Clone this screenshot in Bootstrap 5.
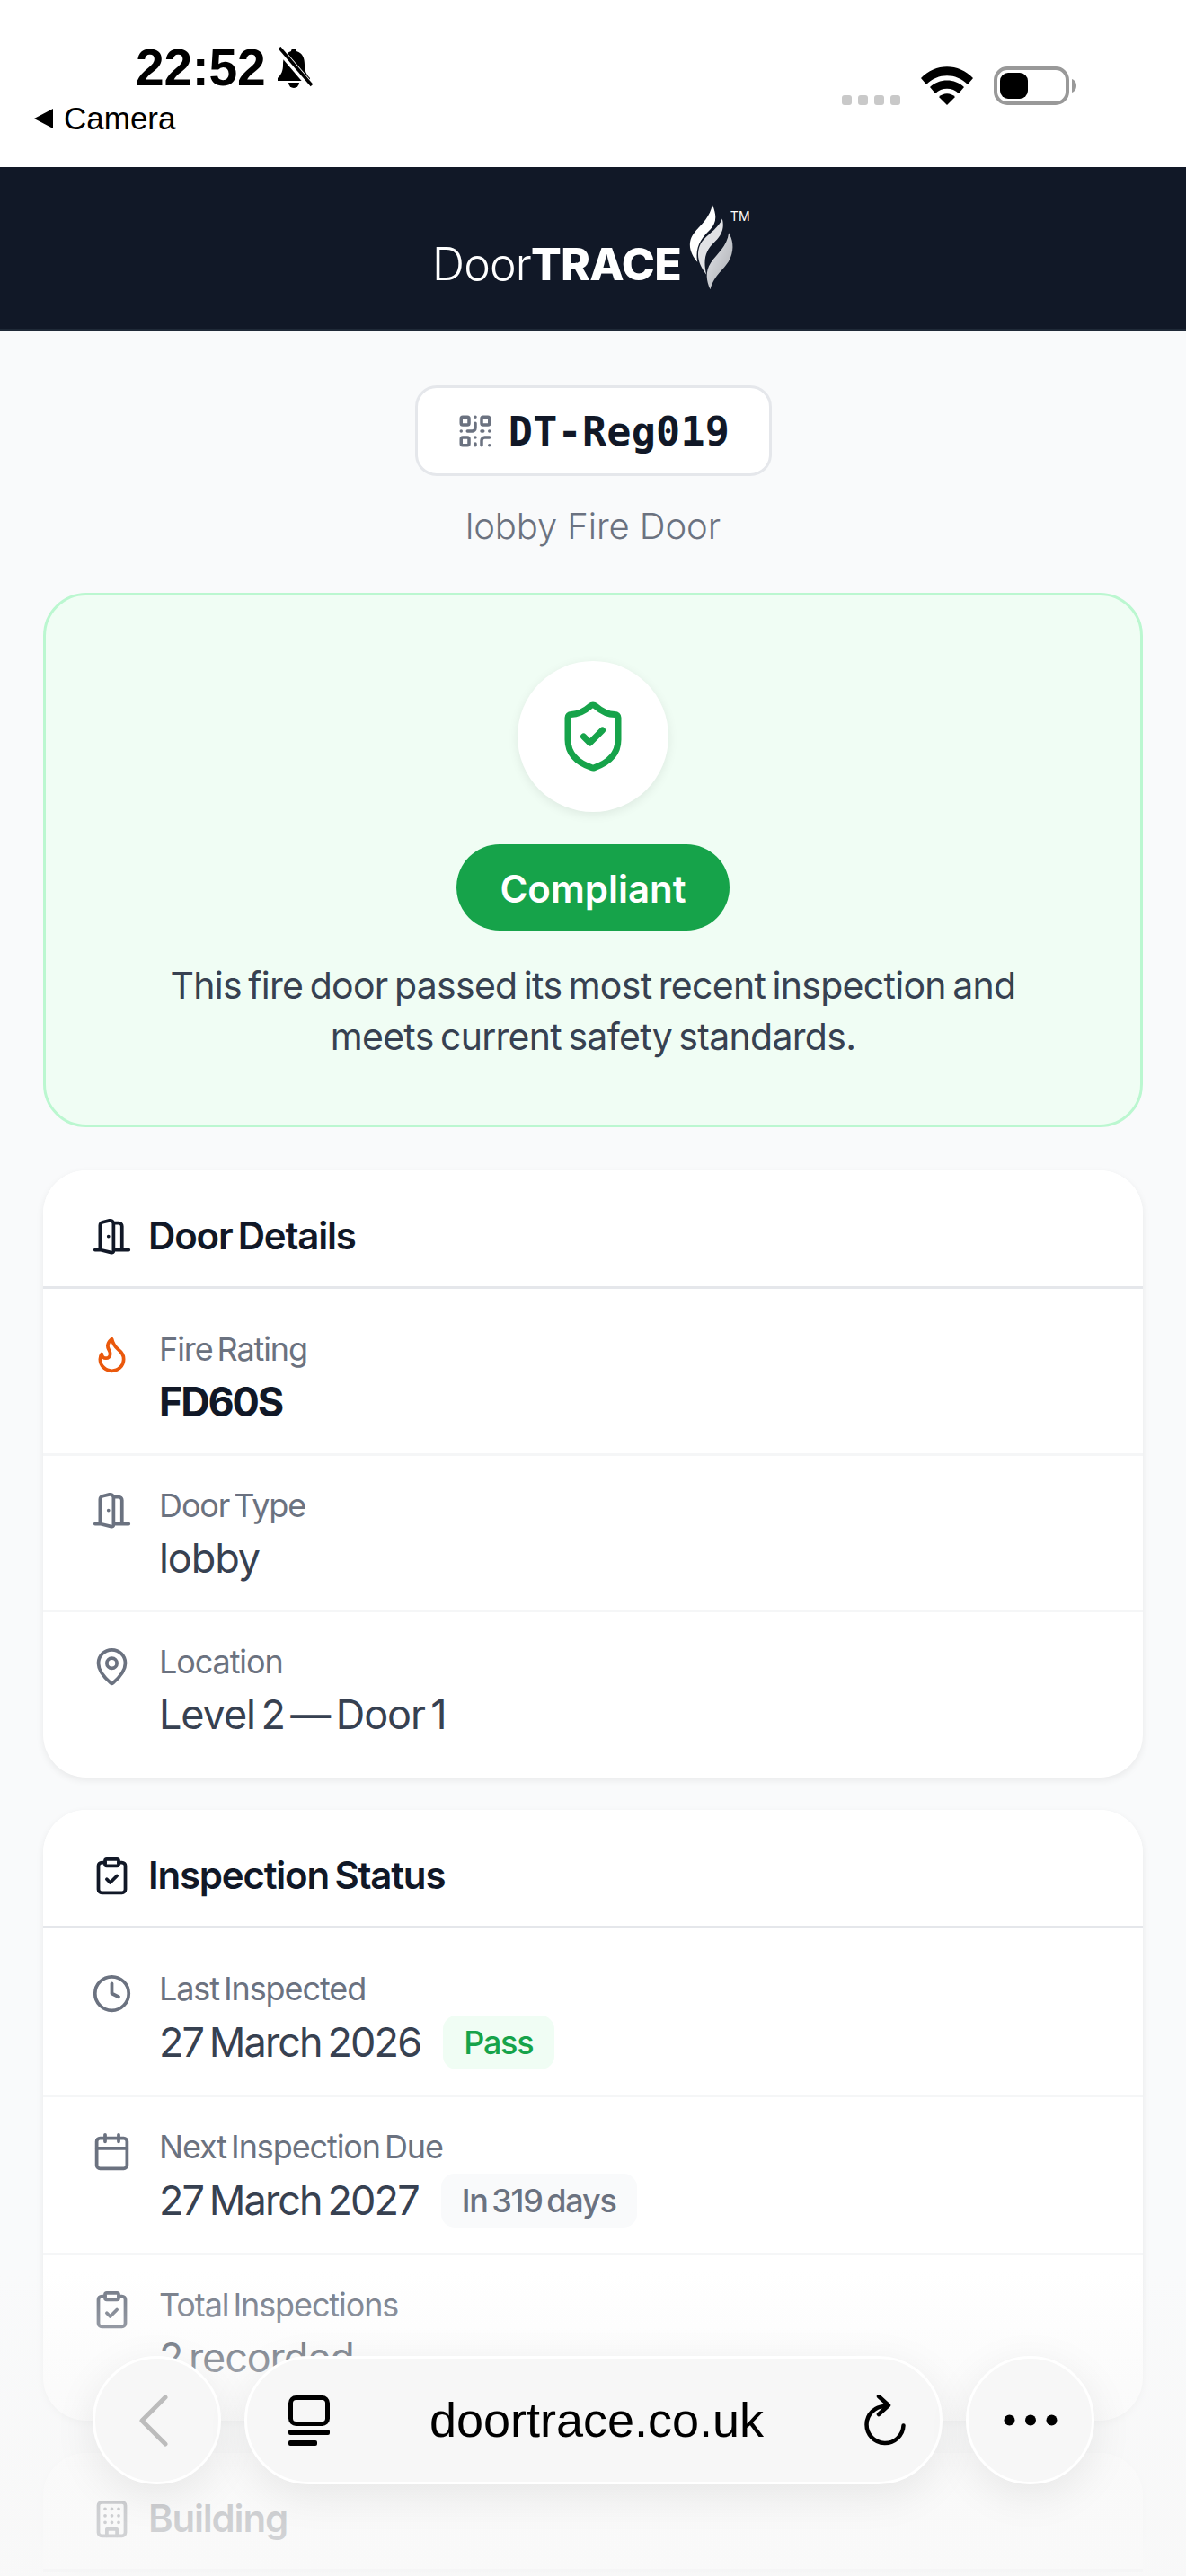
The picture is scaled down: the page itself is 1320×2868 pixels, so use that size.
<!DOCTYPE html>
<html lang="en">
<head>
    <meta charset="UTF-8">
    <meta name="viewport" content="width=device-width, initial-scale=1.0">
    <title>DoorTRACE</title>
    <link href="https://cdn.jsdelivr.net/npm/bootstrap@5.3.0/dist/css/bootstrap.min.css" rel="stylesheet">
    <style>
        html, body { height: 2868px; overflow: hidden; }
        body { background: #f9fafb; font-family: Inter, "Noto Sans", sans-serif; color: #374151; }
        .page-wrap { position: relative; height: 2868px; overflow: hidden; }
        svg { display: block; flex-shrink: 0; }
        .ico { fill: none; stroke: currentColor; stroke-width: 2; stroke-linecap: round; stroke-linejoin: round; }

        .status-bar { height: 186px; background: #fff; padding: 47px 122px 0 38px; font-family: "Liberation Sans", sans-serif; color: #000; }
        .clock-row { padding-left: 113px; height: 56px; gap: 10px; }
        .clock-text { font-size: 57px; line-height: 56px; font-weight: 700; letter-spacing: -.3px; }
        .back-app { margin-top: 11px; font-size: 35px; line-height: 36px; gap: 12px; }
        .back-tri { width: 0; height: 0; border-top: 11px solid transparent; border-bottom: 11px solid transparent; border-right: 21px solid #000; }
        .status-right { margin-top: 28px; height: 42px; }
        .sig-dots { gap: 7px; margin-right: 23px; }
        .sig-dot { width: 11px; height: 11px; background: #c9c9c9; border-radius: 3px; }
        .wifi-ico { margin-right: 23px; }

        .top-head { height: 183px; background: #111827; border-bottom: 3px solid #1f2937; padding-left: 481px; padding-top: 40px; color: #fff; }
        .logo-word { font-size: 50px; line-height: 50px; margin-top: 43px; letter-spacing: -.8px; }
        .logo-word span { font-weight: 300; }
        .logo-word b { font-weight: 800; }
        .logo-flame { margin-left: 8px; }
        .logo-tm { font-size: 14px; line-height: 14px; margin-top: 8px; margin-left: -5px; }

        .main-col { padding: 60px 48px 0; }
        .reg-chip { width: 397px; height: 101px; background: #fff; border: 3px solid #e5e7eb; border-radius: 24px; color: #6b7280; }
        .reg-num { font-family: "DejaVu Sans Mono", monospace; font-weight: 700; font-size: 45px; color: #111827; letter-spacing: .3px; padding-top: 2px; }
        .door-sub { font-size: 40px; line-height: 56px; margin-top: 28px; color: #6b7280; font-weight: 300; letter-spacing: -.1px; }

        .ok-panel { margin-top: 46px; height: 595px; background: #f0fdf4; border: 3px solid #bbf7d0; border-radius: 48px; padding-top: 73px; }
        .ok-circle { width: 168px; height: 168px; border-radius: 50%; background: #fff; box-shadow: 0 3px 12px rgba(0,0,0,.08); color: #16a34a; }
        .ok-pill { margin-top: 36px; width: 304px; height: 96px; border-radius: 48px; background: #16a34a; color: #fff; font-size: 42px; font-weight: 600; padding-top: 3px; }
        .ok-text { margin-top: 33px; font-size: 41px; line-height: 57px; letter-spacing: -.7px; word-spacing: -3.5px; }

        .info-card { margin-top: 48px; border: 0; border-radius: 48px; background: #fff; box-shadow: 0 3px 9px rgba(0,0,0,.07); }
        .info-card + .info-card { margin-top: 36px; }
        .info-head { background: #fff; border-bottom: 3px solid #e5e7eb; padding: 48px 54px 31px; height: 132px; border-radius: 48px 48px 0 0 !important; font-size: 42px; line-height: 50px; font-weight: 600; color: #111827; letter-spacing: -1.2px; word-spacing: -3px; gap: 18px; }
        .info-list { padding: 12px 0 13px; }
        .info-list .info-row { display: flex; gap: 30px; padding: 27px 54px 26px; border-width: 0 0 3px; border-style: solid; border-color: #f5f6f7; background: transparent; color: #374151; }
        .info-list .info-row:last-child { border-bottom-width: 0; }
        .row-ico { color: #6b7280; margin-top: 11px; }
        .row-ico.is-fire { color: #ea580c; }
        .row-label { font-size: 36px; line-height: 56px; color: #6b7280; letter-spacing: -1.1px; word-spacing: -4px; }
        .row-value { font-size: 45px; line-height: 62px; letter-spacing: -1.1px; word-spacing: -5px; }
        .row-value.is-strong { font-weight: 700; color: #111827; letter-spacing: -2.2px; }
        .row-value.has-tag { height: 64px; }
        .row-date { letter-spacing: -1.9px; word-spacing: -4px; }
        .tag-soft { font-size: 36px; line-height: 60px; height: 60px; padding: 0 23px; border-radius: 15px; margin-left: 25px; letter-spacing: -1.2px; word-spacing: -4px; font-weight: 500; }
        .tag-pass { background: #f0fdf4; color: #16a34a; }
        .tag-muted { background: #f9fafb; color: #6b7280; }

        .bottom-fade { position: absolute; left: 0; right: 0; bottom: 0; height: 340px; pointer-events: none; background: linear-gradient(to bottom, rgba(248,248,248,0), rgba(248,248,248,.55) 35%, rgba(248,248,248,.8) 70%, rgba(248,248,248,.85)); }
        .safari-bar { position: absolute; left: 103px; right: 102px; bottom: 102px; height: 143px; gap: 26px; }
        .safari-btn { background: #f7f7f7; border: 3px solid #fff; box-shadow: 0 12px 48px rgba(0,0,0,.08); }
        .safari-round { width: 143px; border-radius: 50%; }
        .chev-back { margin-right: 8px; }
        .safari-url { flex: 1; border-radius: 72px; padding: 0 37px 0 46px; font-family: "Liberation Sans", sans-serif; font-size: 54px; color: #000; }
    </style>
</head>

<body>
    <div class="page-wrap">
        <div class="status-bar d-flex justify-content-between">
            <div>
                <div class="clock-row d-flex align-items-center">
                    <span class="clock-text">22:52</span>
                    <svg width="44" height="46" viewBox="0 0 44 46">
                        <path d="M22 2c-2 0-3 1.500-3 3C12 7 10 13 10 20c0 7-2 11-6 15v3h36v-3c-4-4-6-8-6-15 0-7-2-13-9-15 0-1.500-1-3-3-3z"/>
                        <path d="M16 40a6 6 0 0 0 12 0z"/>
                        <path d="M5 2 41 44" stroke="#fff" stroke-width="8"/>
                        <path d="M6 1 42 43" stroke="#000" stroke-width="3.500"/>
                    </svg>
                </div>
                <div class="back-app d-flex align-items-center">
                    <span class="back-tri"></span>
                    <span>Camera</span>
                </div>
            </div>
            <div class="status-right d-flex align-items-end">
                <div class="sig-dots d-flex">
                    <span class="sig-dot"></span><span class="sig-dot"></span><span class="sig-dot"></span><span class="sig-dot"></span>
                </div>
                <svg class="wifi-ico" width="58" height="43" viewBox="0 0 58 43">
                    <path d="M0 13C16-4 42-4 58 13l-6 7C39 7 19 7 6 20z"/>
                    <path d="M10 23c10-10 28-10 38 0l-6 7c-7-7-19-7-26 0z"/>
                    <path d="M20 34c5-5 13-5 18 0L29 43z"/>
                </svg>
                <svg width="92" height="43" viewBox="0 0 92 43">
                    <rect x="2" y="2" width="80" height="39" rx="13" fill="none" stroke="#999" stroke-width="4"/>
                    <rect x="7" y="7" width="31" height="29" rx="9"/>
                    <path d="M87 14c3 1 5 4 5 7.500s-2 6.500-5 7.500z" fill="#999"/>
                </svg>
            </div>
        </div>

        <div class="top-head d-flex align-items-start">
            <div class="logo-word"><span>Door</span><b>TRACE</b></div>
            <svg class="logo-flame" width="52" height="98" viewBox="975 80 155 295">
                <defs>
                    <linearGradient id="flameGrad" x1="0" y1="0" x2="1" y2="1">
                        <stop offset="0" stop-color="#e5e7eb"/>
                        <stop offset="1" stop-color="#a9abb0"/>
                    </linearGradient>
                </defs>
                <path d="M1055 85C1072 125 1068 150 1045 172C1022 195 995 225 1005 278C985 255 972 225 985 195C998 165 1045 140 1055 85Z" fill="#fff"/>
                <path d="M1088 133C1097 165 1085 190 1060 213C1035 237 1022 265 1035 320C1012 290 1000 260 1012 225C1025 190 1075 170 1088 133Z" fill="#e1e2e5"/>
                <path d="M1110 180C1122 200 1130 230 1115 265C1100 300 1060 320 1048 370C1035 340 1030 310 1050 280C1070 250 1105 225 1110 180Z" fill="url(#flameGrad)"/>
            </svg>
            <span class="logo-tm">TM</span>
        </div>

        <div class="main-col">
            <div class="d-flex flex-column align-items-center">
                <div class="reg-chip d-flex align-items-center justify-content-center gap-3">
                    <svg class="ico" width="42" height="42" viewBox="0 0 24 24">
                        <rect width="5" height="5" x="3" y="3" rx="1"/><rect width="5" height="5" x="16" y="3" rx="1"/><rect width="5" height="5" x="3" y="16" rx="1"/>
                        <path d="M21 16h-3a2 2 0 0 0-2 2v3M21 21v.01M12 7v3a2 2 0 0 1-2 2H7M3 12h.01M12 3h.01M12 16v.01M16 12h1M21 12v.01M12 21v-1"/>
                    </svg>
                    <span class="reg-num">DT-Reg019</span>
                </div>
                <div class="door-sub">lobby Fire Door</div>
            </div>

            <div class="ok-panel d-flex flex-column align-items-center text-center">
                <div class="ok-circle d-flex align-items-center justify-content-center">
                    <svg class="ico" width="84" height="84" viewBox="0 0 24 24">
                        <path d="M20 13c0 5-3.500 7.500-7.660 8.950a1 1 0 0 1-.67-.01C7.500 20.500 4 18 4 13V6a1 1 0 0 1 1-1c2 0 4.500-1.200 6.240-2.720a1.170 1.170 0 0 1 1.520 0C14.510 3.810 17 5 19 5a1 1 0 0 1 1 1z"/>
                        <path d="m9 12 2 2 4-4"/>
                    </svg>
                </div>
                <div class="ok-pill d-flex align-items-center justify-content-center">Compliant</div>
                <div class="ok-text">This fire door passed its most recent inspection and<br>meets current safety standards.</div>
            </div>

            <div class="card info-card">
                <div class="card-header info-head d-flex align-items-center">
                    <svg class="ico" width="45" height="45" viewBox="0 0 24 24"><g transform="matrix(-1 0 0 1 24 0)"><path d="M11 20H2M11 4.562v16.157a1 1 0 0 0 1.242.97L19 20V5.562a2 2 0 0 0-1.515-1.940l-4-1A2 2 0 0 0 11 4.561zM11 4H8a2 2 0 0 0-2 2v14M14 12h.01M22 20h-3"/></g></svg>
                    <span>Door Details</span>
                </div>
                <div class="list-group list-group-flush info-list">
                    <div class="list-group-item info-row">
                        <svg class="ico row-ico is-fire" width="45" height="45" viewBox="0 0 24 24"><path d="M8.500 14.500A2.500 2.500 0 0 0 11 12c0-1.380-.5-2-1-3-1.072-2.143-.224-4.054 2-6 .5 2.500 2 4.900 4 6.500 2 1.600 3 3.500 3 5.500a7 7 0 1 1-14 0c0-1.153.433-2.294 1-3a2.500 2.500 0 0 0 2.500 2.500z"/></svg>
                        <div>
                            <div class="row-label">Fire Rating</div>
                            <div class="row-value is-strong">FD60S</div>
                        </div>
                    </div>
                    <div class="list-group-item info-row">
                        <svg class="ico row-ico" width="45" height="45" viewBox="0 0 24 24"><g transform="matrix(-1 0 0 1 24 0)"><path d="M11 20H2M11 4.562v16.157a1 1 0 0 0 1.242.97L19 20V5.562a2 2 0 0 0-1.515-1.940l-4-1A2 2 0 0 0 11 4.561zM11 4H8a2 2 0 0 0-2 2v14M14 12h.01M22 20h-3"/></g></svg>
                        <div>
                            <div class="row-label">Door Type</div>
                            <div class="row-value">lobby</div>
                        </div>
                    </div>
                    <div class="list-group-item info-row">
                        <svg class="ico row-ico" width="45" height="45" viewBox="0 0 24 24"><path d="M20 10c0 4.993-5.539 10.193-7.399 11.799a1 1 0 0 1-1.202 0C9.539 20.193 4 14.993 4 10a8 8 0 0 1 16 0"/><circle cx="12" cy="10" r="3"/></svg>
                        <div>
                            <div class="row-label">Location</div>
                            <div class="row-value">Level 2 — Door 1</div>
                        </div>
                    </div>
                </div>
            </div>

            <div class="card info-card">
                <div class="card-header info-head d-flex align-items-center">
                    <svg class="ico" width="45" height="45" viewBox="0 0 24 24"><rect width="8" height="4" x="8" y="2" rx="1"/><path d="M16 4h2a2 2 0 0 1 2 2v14a2 2 0 0 1-2 2H6a2 2 0 0 1-2-2V6a2 2 0 0 1 2-2h2"/><path d="m9 14 2 2 4-4"/></svg>
                    <span>Inspection Status</span>
                </div>
                <div class="list-group list-group-flush info-list">
                    <div class="list-group-item info-row">
                        <svg class="ico row-ico" width="45" height="45" viewBox="0 0 24 24"><circle cx="12" cy="12" r="10"/><path d="M12 6v6l4 2"/></svg>
                        <div>
                            <div class="row-label">Last Inspected</div>
                            <div class="row-value has-tag d-flex align-items-center"><span class="row-date">27 March 2026</span><span class="tag-soft tag-pass">Pass</span></div>
                        </div>
                    </div>
                    <div class="list-group-item info-row">
                        <svg class="ico row-ico" width="45" height="45" viewBox="0 0 24 24"><path d="M8 2v4M16 2v4M3 10h18"/><rect width="18" height="18" x="3" y="4" rx="2"/></svg>
                        <div>
                            <div class="row-label">Next Inspection Due</div>
                            <div class="row-value has-tag d-flex align-items-center"><span class="row-date">27 March 2027</span><span class="tag-soft tag-muted">In 319 days</span></div>
                        </div>
                    </div>
                    <div class="list-group-item info-row">
                        <svg class="ico row-ico" width="45" height="45" viewBox="0 0 24 24"><rect width="8" height="4" x="8" y="2" rx="1"/><path d="M16 4h2a2 2 0 0 1 2 2v14a2 2 0 0 1-2 2H6a2 2 0 0 1-2-2V6a2 2 0 0 1 2-2h2"/><path d="m9 14 2 2 4-4"/></svg>
                        <div>
                            <div class="row-label">Total Inspections</div>
                            <div class="row-value">2 recorded</div>
                        </div>
                    </div>
                </div>
            </div>

            <div class="card info-card">
                <div class="card-header info-head d-flex align-items-center">
                    <svg class="ico" width="45" height="45" viewBox="0 0 24 24"><rect width="16" height="20" x="4" y="2" rx="2"/><path d="M9 22v-4h6v4M8 6h.01M16 6h.01M12 6h.01M12 10h.01M12 14h.01M16 10h.01M16 14h.01M8 10h.01M8 14h.01"/></svg>
                    <span>Building</span>
                </div>
            </div>
        </div>

        <div class="bottom-fade"></div>

        <div class="safari-bar d-flex">
            <div class="safari-btn safari-round d-flex align-items-center justify-content-center">
                <svg class="chev-back" width="34" height="58" viewBox="0 0 34 58"><path d="M30 3 4 29l26 26" fill="none" stroke="#bcbcbc" stroke-width="5" stroke-linecap="round" stroke-linejoin="round"/></svg>
            </div>
            <div class="safari-btn safari-url d-flex align-items-center justify-content-between">
                <svg width="46" height="56" viewBox="0 0 46 56">
                    <rect x="2.500" y="2.500" width="41" height="29" rx="6" fill="none" stroke="#000" stroke-width="5"/>
                    <rect y="38" width="46" height="6" rx="2"/>
                    <rect y="50" width="32" height="6" rx="2"/>
                </svg>
                <span>doortrace.co.uk</span>
                <svg width="48" height="58" viewBox="0 0 48 58">
                    <path d="M24 13a20.500 20.500 0 1 0 20.500 21.500M17 2l11 10-11 10" fill="none" stroke="#000" stroke-width="4.500" stroke-linecap="round" stroke-linejoin="round"/>
                </svg>
            </div>
            <div class="safari-btn safari-round d-flex align-items-center justify-content-center">
                <svg width="60" height="13" viewBox="0 0 60 13"><circle cx="6.500" cy="6.500" r="6"/><circle cx="30" cy="6.500" r="6"/><circle cx="53.500" cy="6.500" r="6"/></svg>
            </div>
        </div>
    </div>
    <script src="https://cdn.jsdelivr.net/npm/bootstrap@5.3.0/dist/js/bootstrap.bundle.min.js"></script>
</body>

</html>
